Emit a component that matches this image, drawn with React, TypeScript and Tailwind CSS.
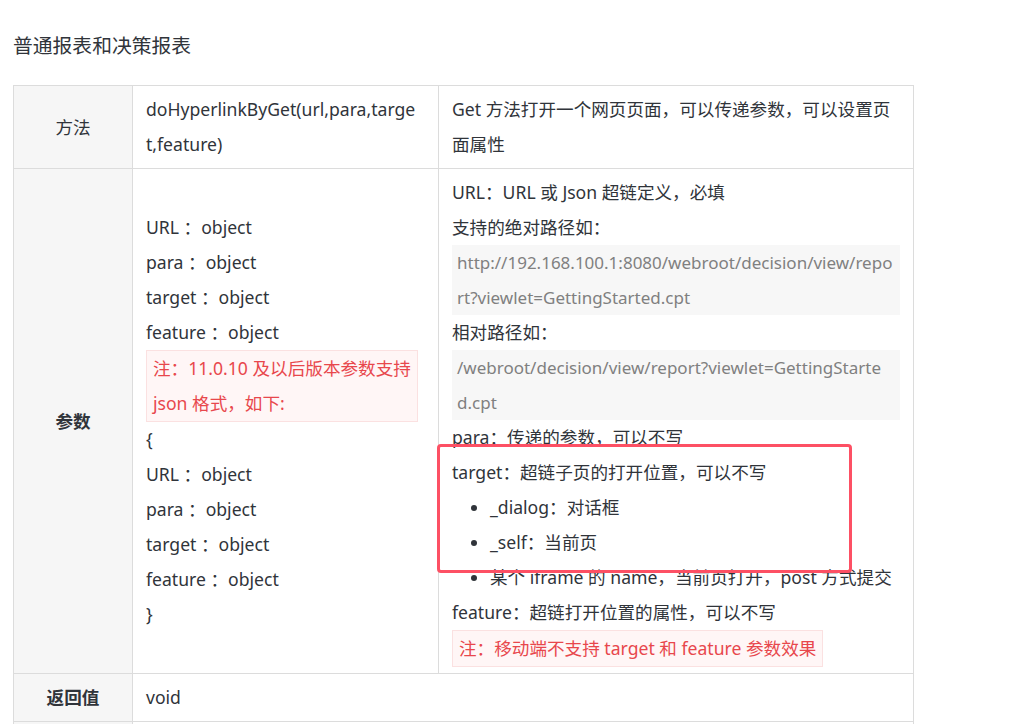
const textFont = { fontFamily: '"Noto Sans", "Noto Sans CJK SC", sans-serif' };

const Note = ({ children }: { children: React.ReactNode }) => (
  <div className="inline-block border border-[#fbe1e1] bg-[#fff6f6] px-[6px] text-[#e8474c]">{children}</div>
);

const Code = ({ children }: { children: React.ReactNode }) => (
  <div className="whitespace-nowrap bg-[#f7f7f7] px-[5px] text-[17px] text-[#808080]">{children}</div>
);

const labelCell = "border border-[#dcdcdc] bg-[#f6f6f6] px-[13px] text-center align-middle";
const cell = "border border-[#dcdcdc] px-[13px] py-[6px] align-middle";

const App = () => {
  return (
    <div className="min-h-screen bg-white text-[#30343a]" style={textFont}>
      <div className="relative px-[13px] pt-[31px]">
        <h3 className="text-[19.8px] leading-[30px] font-normal">普通报表和决策报表</h3>

        <table className="mt-[24px] w-[900px] table-fixed border-collapse text-[17.6px] leading-[35px]">
          <colgroup>
            <col className="w-[119px]" />
            <col className="w-[306px]" />
            <col className="w-[475px]" />
          </colgroup>
          <tbody>
            <tr>
              <td className={labelCell}>方法</td>
              <td className={cell}>
                doHyperlinkByGet(url,para,targe
                <br />
                t,feature)
              </td>
              <td className={cell}>
                Get 方法打开一个网页页面，可以传递参数，可以设置页
                <br />
                面属性
              </td>
            </tr>
            <tr>
              <td className={labelCell + " font-bold"}>参数</td>
              <td className={cell}>
                <div>URL ：object</div>
                <div>para ：object</div>
                <div>target ：object</div>
                <div>feature ：object</div>
                <Note>
                  注：11.0.10 及以后版本参数支持
                  <br />
                  json 格式，如下:
                </Note>
                <div>{"{"}</div>
                <div>URL ：object</div>
                <div>para ：object</div>
                <div>target ：object</div>
                <div>feature ：object</div>
                <div>{"}"}</div>
              </td>
              <td className={cell}>
                <div>URL：URL 或 Json 超链定义，必填</div>
                <div>支持的绝对路径如：</div>
                <Code>
                  http://192.168.100.1:8080/webroot/decision/view/repo
                  <br />
                  rt?viewlet=GettingStarted.cpt
                </Code>
                <div>相对路径如：</div>
                <Code>
                  /webroot/decision/view/report?viewlet=GettingStarte
                  <br />
                  d.cpt
                </Code>
                <div>para：传递的参数，可以不写</div>
                <div>target：超链子页的打开位置，可以不写</div>
                <ul className="list-disc pl-[38px]">
                  <li>_dialog：对话框</li>
                  <li>_self：当前页</li>
                  <li className="whitespace-nowrap">某个 iframe 的 name，当前页打开，post 方式提交</li>
                </ul>
                <div>feature：超链打开位置的属性，可以不写</div>
                <Note>注：移动端不支持 target 和 feature 参数效果</Note>
              </td>
            </tr>
            <tr>
              <td className={labelCell + " py-[6px] font-bold"}>返回值</td>
              <td className={cell} colSpan={2}>
                void
              </td>
            </tr>
            <tr>
              <td className={labelCell + " h-[48px]"} />
              <td className={cell} colSpan={2} />
            </tr>
          </tbody>
        </table>

        <div className="pointer-events-none absolute left-[437px] top-[444px] h-[129px] w-[415px] rounded-[4px] border-[3px] border-[#fd5064]" />
      </div>
    </div>
  );
};

export default App;
